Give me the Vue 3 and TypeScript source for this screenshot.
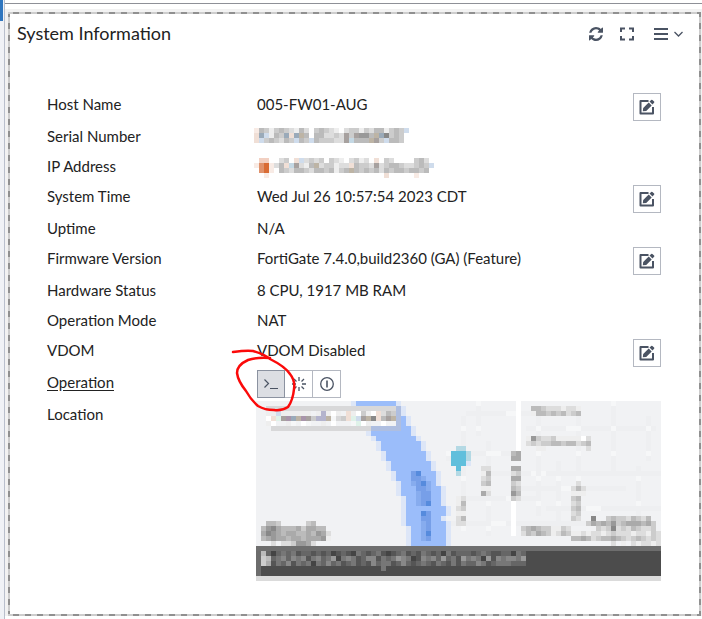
<script setup lang="ts">
interface Row {
  label: string
  value?: string
  kind?: 'serial' | 'ip' | 'operation' | 'map'
  editable?: boolean
}

interface Cell {
  x: number
  y: number
  w: number
  fill: string
}

const rows: Row[] = [
  { label: 'Host Name', value: '005-FW01-AUG', editable: true },
  { label: 'Serial Number', kind: 'serial' },
  { label: 'IP Address', kind: 'ip' },
  { label: 'System Time', value: 'Wed Jul 26 10:57:54 2023 CDT', editable: true },
  { label: 'Uptime', value: 'N/A' },
  { label: 'Firmware Version', value: 'FortiGate 7.4.0,build2360 (GA) (Feature)', editable: true },
  { label: 'Hardware Status', value: '8 CPU, 1917 MB RAM' },
  { label: 'Operation Mode', value: 'NAT' },
  { label: 'VDOM', value: 'VDOM Disabled', editable: true },
  { label: 'Operation', kind: 'operation' },
  { label: 'Location', kind: 'map' },
]

// Non-hex letters are tints, hex digits are grey levels.
const tints: Record<string, string> = {
  o: '#e0926c', O: '#d96c35', p: '#f2d0c2', q: '#f8ebe5', s: '#f0dfd6',
  u: '#9aaab9', v: '#cfdcec', t: '#bdb4a5', y: '#c4d8e4', z: '#a7a19f',
  R: '#9bbdfa', r: '#dde6f7', S: '#779fe8', T: '#568bdd', U: '#87acee',
  P: '#60bfdc', Q: '#b4d9e4', l: '#f1f2f4', w: '#ffffff', g: '#f6f7f8',
  h: '#eeeff1', B: '#aebee0', k: '#d8d8d9', m: '#a895aa', n: '#b4b4cd', i: '#dff2e9',
}

function toCells(lines: string[], cx = 0, cy = 0): Cell[] {
  const out: Cell[] = []
  lines.forEach((line, y) => {
    ;[...line].forEach((ch, x) => {
      if (ch === '.') return
      const fill = tints[ch] ?? `#${ch}${ch}${ch}${ch}${ch}${ch}`
      out.push({ x: (cx + x) * 5, y: (cy + y) * 5, w: 5, fill })
    })
  })
  return out
}

function span(from: number, to: number, y: number, tint: string): Cell {
  return { x: from * 5, y: y * 5, w: (to - from) * 5, fill: tints[tint] ?? tint }
}

const serial = toCells([
  'qbcecbcdebdfcbcdefdccecdbbecbcv',
  'suvebcusutbfbbddcdzcz99btu8cbc.',
  'svcbcdbcvbcvbcccddzybbbtzcvbbc.',
])
const ip = toCells([
  '.ppf.dcfsvdcdcfcdefdcedfsfcdf..fcbd.',
  'qoOqdbsyzdebtdcceddsbccdzdcbbcddcbcv',
  '.oOqfbcdbbcdbbcbecbtbcbcbdbcbbcbbcb.',
  '..q.......................s.....q...',
])

const riverEdges: [number, number][] = [
  [20, 28], [21, 29], [21, 29], [22, 30], [22, 30], [23, 31], [23, 31], [24, 32], [25, 33],
  [25, 33], [26, 34], [26, 34], [27, 35], [27, 35], [28, 36], [28, 36], [29, 36], [29, 37],
  [29, 37], [30, 37], [30, 37], [30, 38], [30, 38], [30, 37], [30, 38], [31, 38], [31, 38],
  [31, 38], [31, 38],
]

const streetRuns: [number, number, number][] = [
  [42, 61, 2], [54, 80, 5], [38, 52, 10], [47, 81, 14], [52, 74, 17],
  [42, 56, 19], [58, 81, 21], [39, 66, 24], [66, 81, 27],
]
const streetCols: [number, number, number][] = [
  [44, 0, 7], [46, 8, 27], [41, 3, 26], [60, 12, 25], [71, 0, 14],
  [64, 2, 20], [76, 13, 23], [56, 3, 23], [78, 3, 12],
]

const map: Cell[] = []
streetRuns.forEach(([a, b, y]) => {
  map.push(span(a, b, y, 'h'), span(a + 8, a + 11, y, 'g'))
})
streetCols.forEach(([x, a, b]) => {
  for (let y = a; y < b; y++) map.push(span(x, x + 1, y, y % 5 ? 'h' : 'g'))
})
for (let y = 0; y < 10; y++) map.push(span(52, 53, y, 'w'))
for (let y = 20; y < 27; y++) map.push(span(51, 52, y, 'w'))
riverEdges.forEach(([a, b], y) => {
  map.push(span(a - 1, b + 1, y, 'r'), span(a, b, y, 'R'))
})
map.push(
  ...toCells(['ST..', 'SSU.', 'USTU', '.SSU', '.USS', '.USS', '.UST'], 31, 14),
  ...toCells(['TS', 'SS', 'US', 'US', 'UT', 'US'], 33, 22),
  // coordinates badge
  ...toCells([
    'kkkkkkkkkkkkkkkkkkkkkkkkkkB',
    'eeveeeeeelenefelsefcefsdbcB',
    'fsizmutmzcnntgkcsivzt8sbztB',
    'eflleglfgllelwlllgifellfllB',
    '.kkkkkkkkkkkkkkkkkkkkBBBBBB',
  ], 2, 1),
  // marker
  ...toCells(['..QQ.', 'gPPPQ', 'hPPPQ', '.PPPr', '..P..', '..Q..'], 38, 9),
  // street labels
  ...toCells(['bbcdddedde', 'ebbcbcbdcb'], 55, 1),
  ...toCells(['e9cddceeeeefd', 'dcdccbbcbbdcb', 'l.eel.......d'], 54, 7),
  ...toCells(['ba', 'aa'], 51, 10),
  ...toCells(['aa', 'dc', 'aa', 'cd', 'bc', '9b', 'cd'], 51, 13),
  ...toCells(['dd', 'eb', 'dc', 'cb', 'ee', 'ad'], 45, 13),
  ...toCells(['ed', 'eb', 'dc', 'ee', 'db', 'dd'], 40, 19),
  ...toCells(['.dl', 'dbd', 'eee', 'cb.', 'dc.', 'cb.', 'dc.', 'cd.'], 63, 16),
  ...toCells(['cbabcceecd', 'dbcabcedbc'], 53, 25),
  ...toCells(['.8..cbccdbcdb.', 'cabab9cbaaabac', '..cdc8dcdbcddc'], 66, 23),
  ...toCells(['eededdedcdddeddecd', 'bbabdcbbabcdcbcdcd', '........d.e.dedded'], 63, 26),
  // map provider mark
  ...toCells(['.bbc.....cb...', 'b98abbbacaabb.', 'a89abaabbab9ad', 'ba9aabaabaaa9e', '..d.ddc99ad...'], 1, 24),
)
for (let y = 29; y < 36; y++) {
  map.push({ x: 0, y: y * 5, w: 405, fill: y === 29 ? '#6e6e6e' : y === 35 ? '#dbdbdb' : '#4c4c4c' })
}
map.push(
  ...toCells([
    '8b64676756656564565476567545675657656475666567655664767',
    '7cb678687857867947875688576798745878696759787495878879',
    '6ca576857674768675675658677568656765765757668756777666',
    '6........................7............................',
  ].map((l) => l.slice(0, 54)), 0, 30),
)
for (let y = 30; y < 35; y++) map.push({ x: 0, y: y * 5, w: 5, fill: '#6c6c6c' })
</script>

<template>
  <div class="page">
    <div class="rail"><div class="rail-mark"></div></div>
    <div class="main">
      <div class="topbar"></div>
      <main class="canvas">
        <section class="panel">
          <div class="panel-inner">
            <header class="head">
              <h1>System Information</h1>
              <div class="tools">
                <button class="tool" aria-label="Refresh">
                  <svg width="14" height="14" viewBox="0 0 1536 1536">
                    <path fill="currentColor" d="M1511 928q0 5-1 7-64 268-268 434.500T764 1536q-146 0-282.500-55T238 1324l-129 129q-19 19-45 19t-45-19-19-45V960q0-26 19-45t45-19h448q26 0 45 19t19 45-19 45l-137 137q71 66 161 102t187 36q134 0 250-65t186-179q11-17 53-117 8-23 30-23h192q13 0 22.500 9.500t9.500 22.500zm25-800v448q0 26-19 45t-45 19h-448q-26 0-45-19t-19-45 19-45l138-138Q969 256 768 256q-134 0-250 65T332 500q-11 17-53 117-8 23-30 23H50q-13 0-22.500-9.500T18 608v-7q65-268 270-434.500T768 0q146 0 284 55.500T1297 212l130-129q19-19 45-19t45 19 19 45z" />
                  </svg>
                </button>
                <button class="tool" aria-label="Full screen">
                  <svg width="14" height="14" viewBox="0 0 14 14">
                    <path fill="none" stroke="currentColor" stroke-width="2" d="M1 5V1.500H5M9 1.500H13V5M13 9V12.500H9M5 12.500H1V9" />
                  </svg>
                </button>
                <button class="tool menu" aria-label="Menu">
                  <svg width="30" height="14" viewBox="0 0 30 14">
                    <path fill="none" stroke="currentColor" stroke-width="2" d="M0 2H14M0 7H14M0 12H14" />
                    <path fill="none" stroke="currentColor" stroke-width="1.300" d="M20.500 5l4 4 4-4" />
                  </svg>
                </button>
              </div>
            </header>

            <dl class="rows">
              <div v-for="row in rows" :key="row.label" class="row" :class="{ tall: row.editable || row.kind === 'operation' }">
                <dt><span :class="{ underlined: row.kind === 'operation' }">{{ row.label }}</span></dt>
                <dd :class="{ flush: row.kind === 'map' }">
                  <svg v-if="row.kind === 'serial'" class="mosaic" width="155" height="15" shape-rendering="crispEdges" aria-hidden="true">
                    <rect v-for="(c, i) in serial" :key="i" :x="c.x" :y="c.y" :width="c.w" height="5" :fill="c.fill" />
                  </svg>
                  <svg v-else-if="row.kind === 'ip'" class="mosaic" width="180" height="20" shape-rendering="crispEdges" aria-hidden="true">
                    <rect v-for="(c, i) in ip" :key="i" :x="c.x" :y="c.y" :width="c.w" height="5" :fill="c.fill" />
                  </svg>
                  <div v-else-if="row.kind === 'operation'" class="ops">
                    <button class="op active" aria-label="Console">
                      <svg width="16" height="16" viewBox="0 0 16 16" fill="none" stroke="currentColor" stroke-width="1.200">
                        <path d="M1.500 3.500l4 4-4 4M7 12.500h8" />
                      </svg>
                    </button>
                    <button class="op" aria-label="Restart">
                      <svg width="16" height="16" viewBox="0 0 16 16" fill="none" stroke="currentColor" stroke-width="1.300">
                        <path d="M8 1v4M8 11v4M1 8h4M11 8h4M3 3l2.500 2.500M10.500 10.500L13 13M3 13l2.500-2.500M10.500 5.500L13 3" />
                      </svg>
                    </button>
                    <button class="op" aria-label="Shut down">
                      <svg width="16" height="16" viewBox="0 0 16 16" fill="none" stroke="currentColor" stroke-width="1.300">
                        <circle cx="8" cy="8" r="6.300" />
                        <path d="M8 4.500v7" stroke-width="1.600" />
                      </svg>
                    </button>
                    <svg class="scribble" width="68" height="66" viewBox="0 0 68 66" aria-hidden="true">
                      <path fill="none" stroke="#fb0a0a" stroke-width="2.500" stroke-linecap="round" stroke-linejoin="round" d="M4 5C11 4 18 3 24 4C31 6 36 8 41 12C49 16 57 21 61 27C65 32 66 36 65 42Q64 53 59 60Q53 64 45 63Q36 63 29 59Q22 53 17 44Q9 34 8 26Q8 18 19 13Q28 10 41 11" />
                    </svg>
                  </div>
                  <svg v-else-if="row.kind === 'map'" class="map" viewBox="0 0 405 180" shape-rendering="crispEdges" role="img" aria-label="Location">
                    <rect width="405" height="180" fill="#f1f2f4" />
                    <rect v-for="(c, i) in map" :key="i" :x="c.x" :y="c.y" :width="c.w" height="5" :fill="c.fill" />
                  </svg>
                  <template v-else>{{ row.value }}</template>
                </dd>
                <button v-if="row.editable" class="edit" :aria-label="`Edit ${row.label}`">
                  <svg width="16" height="16" viewBox="0 0 16 16">
                    <path fill="none" stroke="currentColor" stroke-width="2" stroke-linejoin="round" d="M9.500 2H1.500V14.500H14V8" />
                    <path fill="currentColor" d="M4.200 8.900L9.700 3.400l3 3-5.500 5.500-3.400.4zM10.500 2.600l1.700-1.700q.6-.5 1.200 0l1.700 1.700q.5.600 0 1.200L13.500 5.600z" />
                  </svg>
                </button>
              </div>
            </dl>
          </div>
        </section>
      </main>
    </div>
  </div>
</template>

<style>
body {
  margin: 0;
  background: #fff;
}
</style>

<style scoped>
.page {
  display: flex;
  min-height: 100vh;
  font-family: Lato, "Liberation Sans", sans-serif;
  font-size: 15px;
  line-height: 24px;
  color: #222;
}
.rail {
  flex: none;
  width: 4px;
  background: #f0f2f6;
  border-right: 1px solid #b9bfcc;
}
.rail-mark {
  width: 3px;
  height: 21px;
  background: #2f76bf;
}
.main {
  flex: 1;
  min-width: 0;
}
.topbar {
  height: 3px;
  border-bottom: 1px solid #8e9097;
  margin-bottom: 5px;
}
.canvas {
  padding: 3px 1px 0 3px;
  background: #f2f2f2;
}
.panel {
  padding: 2px;
  background:
    repeating-linear-gradient(90deg, #cdcdcd 0 5px, #909090 5px 11px, #cdcdcd 11px 12px) top / 100% 2px no-repeat,
    repeating-linear-gradient(90deg, #cdcdcd 0 5px, #909090 5px 11px, #cdcdcd 11px 12px) bottom / 100% 2px no-repeat,
    repeating-linear-gradient(180deg, #909090 0 5px, #cdcdcd 5px 11px, #909090 11px 12px);
}
.panel-inner {
  padding: 8px 38px 33px 37px;
  background: #fff;
}
.head {
  display: flex;
  justify-content: space-between;
  align-items: flex-start;
  height: 24px;
  margin: 0 -23px 45px -30px;
}
h1 {
  margin: 0;
  font-size: 18px;
  font-weight: 400;
  line-height: 22px;
}
.tools {
  display: flex;
  gap: 17px;
  height: 24px;
}
button {
  box-sizing: border-box;
  display: flex;
  align-items: center;
  justify-content: center;
  padding: 0;
  background: #fff;
  color: #4a5363;
  border: 0;
  border-radius: 0;
}
.menu {
  margin-left: 3px;
}
.rows {
  margin: 0;
}
.row {
  display: grid;
  grid-template-columns: 210px 1fr auto;
  align-items: start;
  min-height: 30px;
}
.row.tall {
  min-height: 32px;
}
dt,
dd {
  margin: 0;
  padding-top: 1px;
}
dd {
  min-width: 0;
}
.flush {
  margin-left: -1px;
  padding: 0;
}
.underlined {
  text-decoration: underline;
  text-underline-offset: 2px;
}
.edit {
  width: 28px;
  height: 28px;
  margin-top: 2px;
  border: 1px solid #b4b8c1;
}
.mosaic {
  display: block;
  margin: 4px 0 0 -3px;
}
.ops {
  position: relative;
  display: flex;
}
.op {
  width: 28px;
  height: 28px;
  border: 1px solid #b4b8c1;
  border-left: 0;
}
.op.active {
  background: #dcdee3;
  border: 1px solid #8b92a0;
}
.scribble {
  position: absolute;
  left: -28px;
  top: -23px;
  pointer-events: none;
}
.map {
  display: block;
  width: 100%;
}
</style>
